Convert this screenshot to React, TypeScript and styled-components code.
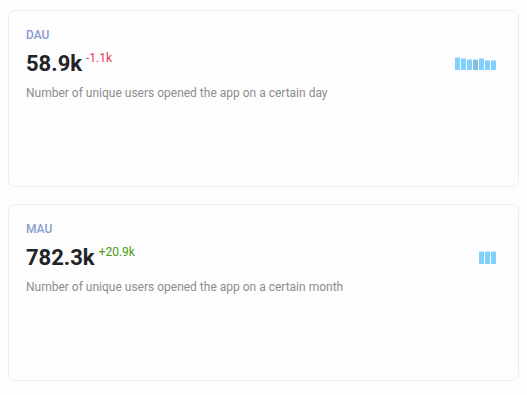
import React from 'react';
import styled, { createGlobalStyle } from 'styled-components';

type Stat = {
	label: string;
	value: string;
	delta: string;
	up: boolean;
	description: string;
	bars: number[];
};

const stats: Stat[] = [
	{
		label: 'DAU',
		value: '58.9k',
		delta: '-1.1k',
		up: false,
		description: 'Number of unique users opened the app on a certain day',
		bars: [13, 12, 11, 11, 12, 10, 10],
	},
	{
		label: 'MAU',
		value: '782.3k',
		delta: '+20.9k',
		up: true,
		description: 'Number of unique users opened the app on a certain month',
		bars: [13, 13, 13],
	},
];

export default function App() {
	return (
		<>
			<GlobalStyle />
			<Page>
				{stats.map((stat) => (
					<Card key={stat.label}>
						<Label>{stat.label}</Label>
						<ValueRow>
							<Value>
								{stat.value}
								<Delta $up={stat.up}>{stat.delta}</Delta>
							</Value>
							<Bars>
								{stat.bars.map((h, i) => (
									<Bar key={i} $dim={stat.bars.length > 3 && i === 3} style={{ height: h }} />
								))}
							</Bars>
						</ValueRow>
						<Description>{stat.description}</Description>
					</Card>
				))}
			</Page>
		</>
	);
}

const GlobalStyle = createGlobalStyle`
	body {
		margin: 0;
		background: #fdfdfd;
		font-family: Roboto, 'Liberation Sans', sans-serif;
	}
`;

const Page = styled.div`
	display: flex;
	flex-direction: column;
	gap: 17px;
	padding: 10px 8px 0 8px;
`;

const Card = styled.div`
	height: 177px;
	box-sizing: border-box;
	border: 1px solid #e9edf4;
	border-radius: 7px;
	background: #fdfdfd;
	padding: 17px 22px 16px 17px;
	display: flex;
	flex-direction: column;
`;

const Label = styled.div`
	font-size: 12px;
	font-weight: 500;
	line-height: 14px;
	color: #8a9bd1;
`;

const ValueRow = styled.div`
	display: flex;
	justify-content: space-between;
	align-items: flex-end;
	margin-top: 8px;
`;

const Value = styled.div`
	font-size: 22px;
	font-weight: 700;
	line-height: 28px;
	color: #222327;
`;

const Delta = styled.sup<{ $up: boolean }>`
	font-size: 12px;
	font-weight: 400;
	margin-left: 4px;
	vertical-align: 9px;
	line-height: 0;
	color: ${(p) => (p.$up ? '#4a9a12' : '#e6394f')};
`;

const Bars = styled.div`
	display: flex;
	align-items: flex-end;
	gap: 1px;
	margin-bottom: 8px;
`;

const Bar = styled.div<{ $dim: boolean }>`
	width: 5px;
	background: ${(p) => (p.$dim ? '#86bfdd' : '#81d0fb')};
	border-top: 1px solid #c2e6fb;
	box-sizing: border-box;
`;

const Description = styled.div`
	margin-top: 7px;
	font-size: 12px;
	line-height: 16px;
	color: #8d8d8d;
`;
